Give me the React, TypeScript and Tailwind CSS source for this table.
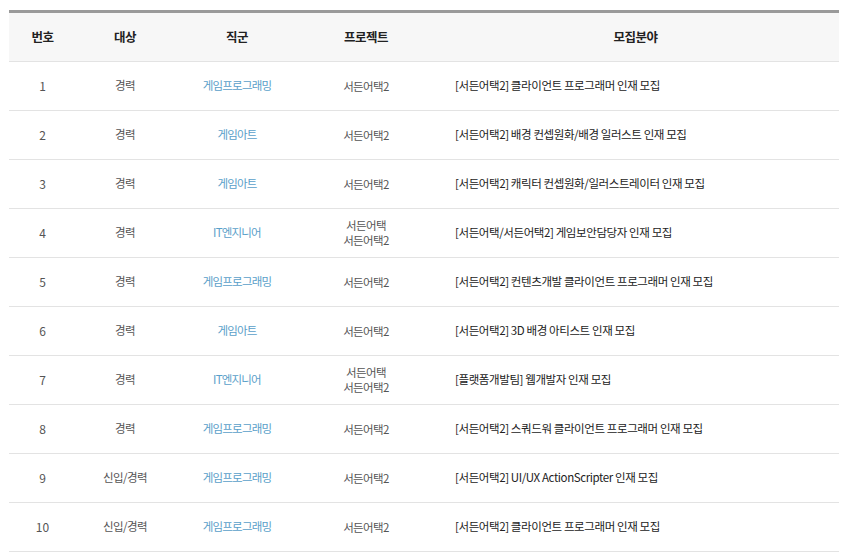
import React from "react";

const rows = [
  { no: "1", target: "경력", job: "게임프로그래밍", project: ["서든어택2"], title: "[서든어택2] 클라이언트 프로그래머 인재 모집" },
  { no: "2", target: "경력", job: "게임아트", project: ["서든어택2"], title: "[서든어택2] 배경 컨셉원화/배경 일러스트 인재 모집" },
  { no: "3", target: "경력", job: "게임아트", project: ["서든어택2"], title: "[서든어택2] 캐릭터 컨셉원화/일러스트레이터 인재 모집" },
  { no: "4", target: "경력", job: "IT엔지니어", project: ["서든어택", "서든어택2"], title: "[서든어택/서든어택2] 게임보안담당자 인재 모집" },
  { no: "5", target: "경력", job: "게임프로그래밍", project: ["서든어택2"], title: "[서든어택2] 컨텐츠개발 클라이언트 프로그래머 인재 모집" },
  { no: "6", target: "경력", job: "게임아트", project: ["서든어택2"], title: "[서든어택2] 3D 배경 아티스트 인재 모집" },
  { no: "7", target: "경력", job: "IT엔지니어", project: ["서든어택", "서든어택2"], title: "[플랫폼개발팀] 웹개발자 인재 모집" },
  { no: "8", target: "경력", job: "게임프로그래밍", project: ["서든어택2"], title: "[서든어택2] 스쿼드워 클라이언트 프로그래머 인재 모집" },
  { no: "9", target: "신입/경력", job: "게임프로그래밍", project: ["서든어택2"], title: "[서든어택2] UI/UX ActionScripter 인재 모집" },
  { no: "10", target: "신입/경력", job: "게임프로그래밍", project: ["서든어택2"], title: "[서든어택2] 클라이언트 프로그래머 인재 모집" },
];

export default function App() {
  return (
    <div
      className="w-[850px] h-[557px] bg-white pt-[10px] pl-[9px] overflow-hidden"
      style={{ fontFamily: '"Noto Sans CJK KR", "Noto Sans", sans-serif' }}
    >
      <table className="w-[830px] border-collapse table-fixed border-t-[3px] border-t-[#9a9a9a]">
        <colgroup>
          <col className="w-[67px]" />
          <col className="w-[98px]" />
          <col className="w-[126px]" />
          <col className="w-[132px]" />
          <col />
        </colgroup>
        <thead>
          <tr className="h-[50px] bg-[#f7f7f7] border-b border-[#e3e3e3]">
            {["번호", "대상", "직군", "프로젝트", "모집분야"].map((h) => (
              <th key={h} className="text-center text-[12.5px] font-bold text-[#222] tracking-[-0.5px] p-0">
                {h}
              </th>
            ))}
          </tr>
        </thead>
        <tbody>
          {rows.map((r) => (
            <tr key={r.no} className="h-[49px] border-b border-[#e3e3e3]">
              <td className="text-center text-[12px] text-[#555] p-0">{r.no}</td>
              <td className="text-center text-[11.5px] text-[#555] tracking-[-0.6px] p-0">{r.target}</td>
              <td className="text-center text-[11.5px] text-[#5aa0c9] tracking-[-0.8px] p-0">{r.job}</td>
              <td className="text-center text-[11.5px] text-[#555] tracking-[-0.6px] leading-[15px] p-0">
                {r.project.map((p) => (
                  <div key={p}>{p}</div>
                ))}
              </td>
              <td className="text-left text-[11.5px] text-[#222] tracking-[-0.4px] pl-[23px] p-0">{r.title}</td>
            </tr>
          ))}
        </tbody>
      </table>
    </div>
  );
}
